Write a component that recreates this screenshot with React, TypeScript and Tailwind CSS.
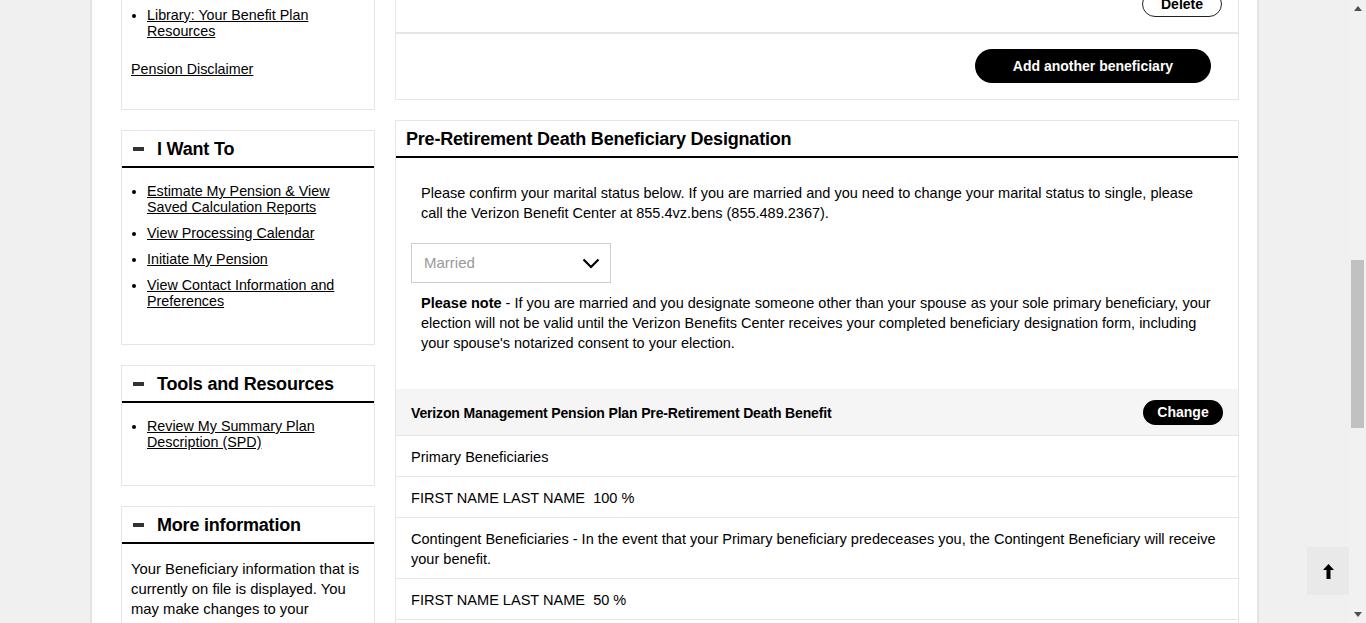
import React from "react";

const Minus = () => <span className="inline-block w-[11px] h-[4px] bg-[#333] mr-[13px] shrink-0" />;

const SideHeader = ({ title }: { title: string }) => (
  <div className="h-[35px] flex items-center pl-[11px] border-b-2 border-black box-content">
    <Minus />
    <span className="text-[18px] font-semibold tracking-[-0.2px] leading-none">{title}</span>
  </div>
);

const LinkItem = ({ children }: { children: React.ReactNode }) => (
  <li>
    <a href="#" className="underline text-black">{children}</a>
  </li>
);

const Row = ({ children }: { children: React.ReactNode }) => (
  <div className="px-[15px] pt-[11px] pb-[9px] leading-[20px] text-[14.55px] border-b border-[#e6e6e6]">{children}</div>
);

export default function App() {
  return (
    <div className="relative flex h-[623px] w-[1366px] overflow-hidden bg-[#f0f0f0] text-black font-['Liberation_Sans',Arial,sans-serif]">
      <div className="flex-1 flex justify-center">
        <div className="w-[1169px] shrink-0 bg-white border-x-2 border-[#e3e3e3] pl-[29px] pr-[18px] flex gap-5 items-start">
          {/* Sidebar */}
          <div className="w-[254px] shrink-0 flex flex-col gap-5 text-[14.3px] leading-[16px]">
            <div className="border-x border-b border-[#e6e6e6] px-[9px] pt-[7px] pb-[32px]">
              <ul className="list-disc pl-[16px]">
                <LinkItem>Library: Your Benefit Plan Resources</LinkItem>
              </ul>
              <div className="mt-[22px]">
                <a href="#" className="underline">Pension Disclaimer</a>
              </div>
            </div>

            <div className="border border-[#e6e6e6]">
              <SideHeader title="I Want To" />
              <ul className="list-disc pl-[25px] pr-[9px] pt-[15px] pb-[35px] flex flex-col gap-[10px]">
                <LinkItem>Estimate My Pension &amp; View Saved Calculation Reports</LinkItem>
                <LinkItem>View Processing Calendar</LinkItem>
                <LinkItem>Initiate My Pension</LinkItem>
                <LinkItem>View Contact Information and Preferences</LinkItem>
              </ul>
            </div>

            <div className="border border-[#e6e6e6]">
              <SideHeader title="Tools and Resources" />
              <ul className="list-disc pl-[25px] pr-[9px] pt-[15px] pb-[35px] flex flex-col gap-[10px]">
                <LinkItem>Review My Summary Plan Description (SPD)</LinkItem>
              </ul>
            </div>

            <div className="border border-[#e6e6e6]">
              <SideHeader title="More information" />
              <p className="px-[9px] pt-[15px] pb-[20px] text-[14.8px] leading-[20px]">
                Your Beneficiary information that is currently on file is displayed. You may make changes to your beneficiary designations at any time by selecting Change.
              </p>
            </div>
          </div>

          {/* Main */}
          <div className="flex-1 flex flex-col text-[14.5px]">
            <div className="h-[33px] border-x border-b border-[#e6e6e6] flex justify-end items-end pr-[16px] pb-[15px]">
              <button className="w-[80px] h-[26px] rounded-full border border-[#222] bg-white text-[14px] font-bold leading-none">
                Delete
              </button>
            </div>
            <div className="border border-[#e6e6e6] flex justify-end pt-[15px] pb-[16px] pr-[27px]">
              <button className="w-[236px] h-[34px] rounded-full bg-black text-white text-[14px] font-bold">
                Add another beneficiary
              </button>
            </div>

            <div className="mt-5 border border-[#e6e6e6]">
              <div className="h-[35px] flex items-center pl-[10px] border-b-2 border-black box-content">
                <span className="text-[18px] font-semibold tracking-[-0.2px] leading-none">
                  Pre-Retirement Death Beneficiary Designation
                </span>
              </div>
              <div className="px-[15px] pt-[25px] pb-[36px]">
                <p className="px-[10px] leading-[20px]">
                  Please confirm your marital status below. If you are married and you need to change your marital status to single, please call the Verizon Benefit Center at 855.4vz.bens (855.489.2367).
                </p>
                <div className="mt-[20px] w-[200px] h-[40px] border border-[#cfcfcf] flex items-center justify-between pl-[12px] pr-[10px]">
                  <span className="text-[#999] text-[15px]">Married</span>
                  <svg width="18" height="11" viewBox="0 0 18 11" fill="none">
                    <path d="M1.5 1.5 L9 9 L16.5 1.5" stroke="#000" strokeWidth="2.2" />
                  </svg>
                </div>
                <p className="mt-[10px] pl-[10px] pr-0 leading-[20px]">
                  <span className="font-bold">Please note</span> - If you are married and you designate someone other than your spouse as your sole primary beneficiary, your election will not be valid until the Verizon Benefits Center receives your completed beneficiary designation form, including your spouse's notarized consent to your election.
                </p>
              </div>
              <div className="h-[47px] bg-[#f5f5f5] border-b border-[#e6e6e6] flex items-center justify-between pl-[15px] pr-[15px]">
                <span className="text-[14px] font-semibold tracking-[-0.15px] pt-[2px]">
                  Verizon Management Pension Plan Pre-Retirement Death Benefit
                </span>
                <button className="w-[80px] h-[25px] rounded-full bg-black text-white text-[14px] font-bold leading-none">
                  Change
                </button>
              </div>
              <Row>Primary Beneficiaries</Row>
              <Row>FIRST NAME LAST NAME&nbsp; 100 %</Row>
              <Row>
                Contingent Beneficiaries - In the event that your Primary beneficiary predeceases you, the Contingent Beneficiary will receive your benefit.
              </Row>
              <Row>FIRST NAME LAST NAME&nbsp; 50 %</Row>
              <Row>FIRST NAME LAST NAME&nbsp; 50 %</Row>
            </div>
          </div>
        </div>
      </div>

      {/* Scrollbar */}
      <div className="w-[17px] shrink-0 bg-[#f1f1f1] flex flex-col">
        <div className="h-[17px] flex items-center justify-center">
          <svg width="8" height="5" viewBox="0 0 8 5"><path d="M0 5 L4 0 L8 5 Z" fill="#505050" /></svg>
        </div>
        <div className="flex-1 px-[2px] pt-[243px]">
          <div className="h-[168px] bg-[#c1c1c1]" />
        </div>
        <div className="h-[17px] flex items-center justify-center">
          <svg width="8" height="5" viewBox="0 0 8 5"><path d="M0 0 L8 0 L4 5 Z" fill="#505050" /></svg>
        </div>
      </div>

      {/* Scroll to top */}
      <button className="absolute right-[17px] bottom-[28px] w-[42px] h-[48px] bg-[#e9e9e9] flex items-center justify-center">
        <svg width="11" height="15" viewBox="0 0 11 15">
          <path d="M5.5 0 L11 6 L7.5 6 L7.5 15 L3.5 15 L3.5 6 L0 6 Z" fill="#000" />
        </svg>
      </button>
    </div>
  );
}
